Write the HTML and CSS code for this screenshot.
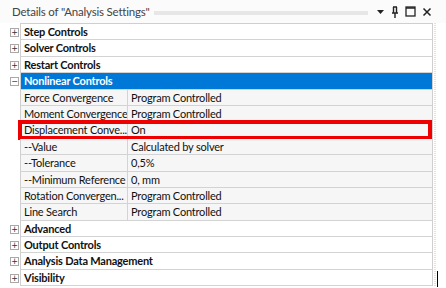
FILE: index.html
```html
<!DOCTYPE html>
<html lang="en">
<head>
  <meta charset="UTF-8" />
  <title>Details of "Analysis Settings"</title>
  <link rel="stylesheet" href="styles.css">
</head>
<body>
  <div class="panel">
    <div class="titlebar">
      <span class="title">Details of "Analysis Settings"</span>
      <span class="grip"></span>
      <span class="tools">
        <svg width="9" height="8" viewBox="0 0 9 8"><path d="M1 2h7L4.5 6z" fill="#222"/></svg>
        <svg width="8" height="12" viewBox="0 0 8 12"><path d="M2 1h4M2.5 1v6M5.5 1v6M1 7h6M4 7v5" stroke="#222" stroke-width="1.4" fill="none"/></svg>
        <svg width="11" height="11" viewBox="0 0 11 11"><rect x="1" y="1" width="9" height="9" stroke="#222" stroke-width="1.3" fill="none"/><path d="M1 2h9" stroke="#222" stroke-width="1.5"/></svg>
        <svg width="10" height="10" viewBox="0 0 10 10"><path d="M1.5 1.5l7 7M8.5 1.5l-7 7" stroke="#222" stroke-width="1.5"/></svg>
      </span>
    </div>

    <div class="body">
      <div class="grid">
        <div class="row group"><span class="toggle">+</span><div class="cell full">Step Controls</div></div>
        <div class="row group"><span class="toggle">+</span><div class="cell full">Solver Controls</div></div>
        <div class="row group"><span class="toggle">+</span><div class="cell full">Restart Controls</div></div>
        <div class="row group open"><span class="toggle">&minus;</span><div class="cell full">Nonlinear Controls</div></div>
        <div class="row prop"><div class="cell name">Force Convergence</div><div class="cell value">Program Controlled</div></div>
        <div class="row prop"><div class="cell name">Moment Convergence</div><div class="cell value">Program Controlled</div></div>
        <div class="row prop marked"><div class="cell name">Displacement Conve...</div><div class="cell value">On</div></div>
        <div class="row prop"><div class="cell name">--Value</div><div class="cell value">Calculated by solver</div></div>
        <div class="row prop"><div class="cell name">--Tolerance</div><div class="cell value">0,5%</div></div>
        <div class="row prop"><div class="cell name">--Minimum Reference</div><div class="cell value">0, mm</div></div>
        <div class="row prop"><div class="cell name">Rotation Convergen...</div><div class="cell value">Program Controlled</div></div>
        <div class="row prop"><div class="cell name">Line Search</div><div class="cell value">Program Controlled</div></div>
        <div class="row group"><span class="toggle">+</span><div class="cell full">Advanced</div></div>
        <div class="row group"><span class="toggle">+</span><div class="cell full">Output Controls</div></div>
        <div class="row group"><span class="toggle">+</span><div class="cell full">Analysis Data Management</div></div>
        <div class="row group"><span class="toggle">+</span><div class="cell full">Visibility</div></div>
      </div>
      <div class="scrollbar"></div>
      <div class="caret"></div>
    </div>
  </div>
</body>
</html>
```

FILE: styles.css
```css
body {
  margin: 0;
  background: #fff;
  font-family: Lato, "Noto Sans", sans-serif;
  font-size: 11px;
  letter-spacing: -0.2px;
  color: #111;
}
.panel {
  width: 446px;
  height: 288px;
  overflow: hidden;
}
.titlebar {
  height: 23px;
  display: flex;
  align-items: center;
  padding: 0 14px 0 12px;
  background: #fbfbfb;
}
.title {
  font-size: 11.5px;
  color: #444;
  white-space: nowrap;
}
.grip {
  flex: 1;
  height: 4px;
  margin: 2px 8px 0 4px;
  background-image: radial-gradient(#cfcfcf 0.6px, transparent 0.8px);
  background-size: 2px 2px;
}
.tools {
  display: flex;
  align-items: center;
  gap: 6px;
}
.body {
  display: flex;
  position: relative;
}
.grid {
  margin-left: 20px;
  width: 412px;
  border-top: 1px solid #cfcfcf;
  border-right: 1px solid #cfcfcf;
}
.row {
  position: relative;
  display: flex;
  height: 16.4px;
  box-sizing: border-box;
  border-bottom: 1px solid #d3d3d3;
  border-left: 1px solid #cfcfcf;
  line-height: 15px;
  white-space: nowrap;
}
.toggle {
  position: absolute;
  left: -11px;
  top: 4px;
  width: 7px;
  height: 7px;
  border: 1px solid #a8a8a8;
  background: #fff;
  font-family: "DejaVu Sans", sans-serif;
  font-size: 8px;
  letter-spacing: 0;
  line-height: 7px;
  text-align: center;
  color: #333;
}
.cell {
  padding-left: 3px;
  overflow: hidden;
}
.group .full {
  font-weight: bold;
  flex: 1;
}
.group.open {
  background: #0078d7;
  color: #fff;
}
.prop {
  background: #f6f6f6;
}
.name {
  width: 103px;
  border-right: 1px solid #d3d3d3;
}
.value {
  flex: 1;
}
.marked::after {
  content: "";
  position: absolute;
  left: -3px;
  right: 0;
  top: -2px;
  bottom: -2px;
  border: 4px solid #ee0000;
}
.scrollbar {
  width: 2px;
  margin-left: 1px;
  background-image: linear-gradient(#e2e2e2 50%, transparent 50%);
  background-size: 2px 2px;
}
.caret {
  position: absolute;
  left: 437px;
  top: 248px;
  width: 1px;
  height: 16px;
  background: #000;
}
```
